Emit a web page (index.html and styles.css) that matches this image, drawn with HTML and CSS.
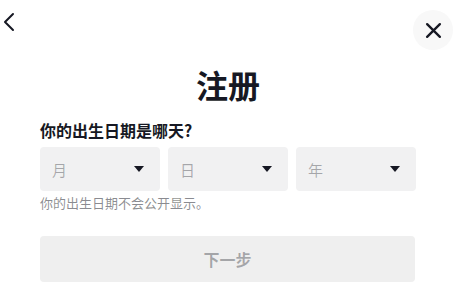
FILE: index.html
```html
<!DOCTYPE html>
<html lang="zh-CN">
<head>
<meta charset="utf-8">
<link rel="stylesheet" href="styles.css">
</head>
<body>
<div class="page">
  <div class="topbar">
    <button class="back" aria-label="返回">
      <svg width="12" height="20" viewBox="0 0 12 20"><path d="M10 2 L2 10 L10 18" fill="none" stroke="#161823" stroke-width="2" stroke-linecap="round" stroke-linejoin="round"/></svg>
    </button>
    <button class="close" aria-label="关闭">
      <svg width="17" height="17" viewBox="0 0 16 16"><path d="M2 2 L14 14 M14 2 L2 14" fill="none" stroke="#161823" stroke-width="2.2" stroke-linecap="round"/></svg>
    </button>
  </div>
  <div class="content">
    <h1 class="title">注册</h1>
    <div class="label">你的出生日期是哪天?</div>
    <div class="selects">
      <div class="select"><span class="ph">月</span><span class="caret"></span></div>
      <div class="select"><span class="ph">日</span><span class="caret"></span></div>
      <div class="select"><span class="ph">年</span><span class="caret"></span></div>
    </div>
    <div class="hint">你的出生日期不会公开显示。</div>
    <button class="next">下一步</button>
  </div>
</div>
</body>
</html>
```

FILE: styles.css
```css
* { box-sizing: border-box; }
html, body { margin: 0; padding: 0; background: #fff; }
body {
  width: 458px;
  height: 289px;
  overflow: hidden;
  font-family: "Noto Sans CJK SC", "Noto Sans", sans-serif;
  color: #161823;
}
.page { display: flex; flex-direction: column; }
.topbar {
  display: flex;
  justify-content: space-between;
  align-items: flex-start;
  padding: 10px 5px 0 3px;
  height: 60px;
}
.back {
  border: 0; background: none; padding: 0;
  margin-top: 2px;
  width: 12px; height: 20px;
  display: flex;
}
.close {
  border: 0; padding: 0;
  width: 40px; height: 40px;
  border-radius: 50%;
  background: #f8f8f8;
  display: flex; align-items: center; justify-content: center;
}
.content {
  padding: 0 42px 0 40px;
  display: flex; flex-direction: column;
}
.title {
  margin: 2px 0 0;
  font-size: 32px;
  line-height: 44px;
  font-weight: 700;
  text-align: center;
}
.label {
  margin-top: 13px;
  font-size: 16px;
  line-height: 22px;
  font-weight: 700;
}
.selects {
  margin-top: 6px;
  display: flex;
  gap: 8px;
}
.select {
  flex: 1;
  height: 44px;
  background: #f1f1f2;
  border-radius: 4px;
  display: flex;
  align-items: center;
  justify-content: space-between;
  padding: 0 16px 0 12px;
}
.ph {
  font-size: 15px;
  color: rgba(22, 24, 35, 0.34);
}
.caret {
  width: 0; height: 0;
  border-left: 5px solid transparent;
  border-right: 5px solid transparent;
  border-top: 6px solid #161823;
}
.hint {
  margin-top: 2px;
  font-size: 13px;
  line-height: 20px;
  color: rgba(22, 24, 35, 0.5);
}
.next {
  margin-top: 23px;
  height: 46px;
  border: 0;
  border-radius: 4px;
  background: #efefef;
  font-family: inherit;
  font-size: 16px;
  font-weight: 600;
  color: rgba(22, 24, 35, 0.34);
  width: 375px;
}
```
